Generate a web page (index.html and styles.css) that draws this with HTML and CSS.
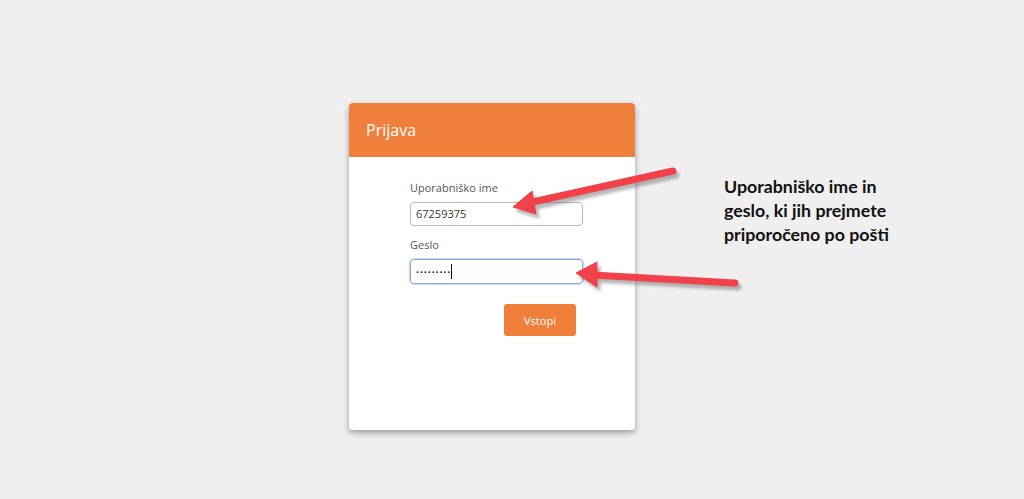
FILE: index.html
```html
<!DOCTYPE html>
<html lang="sl">
<head>
    <meta charset="UTF-8">
    <title>Prijava</title>
    <link rel="stylesheet" href="styles.css">
</head>
<body>
    <div class="page">
        <div class="card">
            <div class="card-header">Prijava</div>
            <form class="card-body" onsubmit="return false;">
                <label class="field-label">Uporabniško ime</label>
                <div class="field">67259375</div>
                <label class="field-label">Geslo</label>
                <div class="field focused"><span class="dots">•••••••••</span><span class="caret"></span></div>
                <button class="btn" type="submit">Vstopi</button>
            </form>
        </div>
    </div>

    <!-- annotation layer -->
    <div class="note">Uporabniško ime in<br>geslo, ki jih prejmete<br>priporočeno po pošti</div>
    <svg class="arrows" width="1024" height="499" viewBox="0 0 1024 499">
        <defs>
            <filter id="shade" x="-20%" y="-50%" width="140%" height="200%">
                <feGaussianBlur stdDeviation="1.6"/>
            </filter>
        </defs>
        <g transform="translate(3,4)" fill="#7a7a7a" stroke="#7a7a7a" opacity="0.55" filter="url(#shade)">
            <line x1="673" y1="171" x2="528" y2="203" stroke-width="7" stroke-linecap="round"/>
            <polygon points="513,207 532,191 536,214"/>
            <line x1="735" y1="283" x2="592" y2="275" stroke-width="7" stroke-linecap="round"/>
            <polygon points="576,273 597,262 597,287"/>
        </g>
        <g fill="#f1414a" stroke="#f1414a">
            <line x1="673" y1="171" x2="528" y2="203" stroke-width="7" stroke-linecap="round"/>
            <polygon points="513,207 532,191 536,214" stroke-width="1" stroke-linejoin="round"/>
            <line x1="735" y1="283" x2="592" y2="275" stroke-width="7" stroke-linecap="round"/>
            <polygon points="576,273 597,262 597,287" stroke-width="1" stroke-linejoin="round"/>
        </g>
    </svg>
</body>
</html>
```

FILE: styles.css
```css
html, body {
    margin: 0;
    padding: 0;
}
body {
    background-color: #efefef;
    font-family: "Open Sans", Arial, sans-serif;
    width: 1024px;
    height: 499px;
    overflow: hidden;
    position: relative;
}
.page {
    padding: 103px 0 0 349px;
}
.card {
    width: 286px;
    height: 327px;
    background: white;
    border-radius: 4px;
    box-shadow: 0 3px 6px rgba(0,0,0,0.35);
    overflow: hidden;
}
.card-header {
    background-color: #f07f3c;
    color: white;
    height: 54px;
    box-sizing: border-box;
    padding: 16px 0 0 17px;
    font-size: 16px;
}
.card-body {
    display: flex;
    flex-direction: column;
    align-items: flex-start;
    padding: 23px 0 0 61px;
    margin: 0;
}
.field-label {
    font-size: 11px;
    color: #555;
    line-height: 16px;
    margin-bottom: 6px;
}
.field {
    width: 173px;
    height: 24px;
    box-sizing: border-box;
    border: 1px solid #b8b8b8;
    border-radius: 4px;
    padding: 0 5px;
    font-size: 11px;
    color: #333;
    line-height: 22px;
    margin-bottom: 11px;
    display: flex;
    align-items: center;
}
.field.focused {
    height: 25px;
    border-color: #8aa8e6;
    box-shadow: 0 0 0 1px #c7d6f5;
    margin-bottom: 20px;
}
.dots {
    font-size: 8px;
    letter-spacing: 0.9px;
    color: #222;
}
.caret {
    display: inline-block;
    width: 1px;
    height: 15px;
    background: #111;
    margin-left: 0;
}
.btn {
    margin-left: 94px;
    width: 72px;
    height: 32px;
    background-color: #f07f3c;
    color: white;
    border: none;
    border-radius: 3px;
    font-family: "Open Sans", Arial, sans-serif;
    font-size: 11px;
    cursor: pointer;
}
.note {
    position: absolute;
    left: 724px;
    top: 174px;
    font-family: Lato, "Open Sans", sans-serif;
    font-weight: bold;
    font-size: 17.8px;
    line-height: 24px;
    color: #111;
}
.arrows {
    position: absolute;
    left: 0;
    top: 0;
    pointer-events: none;
}
```
